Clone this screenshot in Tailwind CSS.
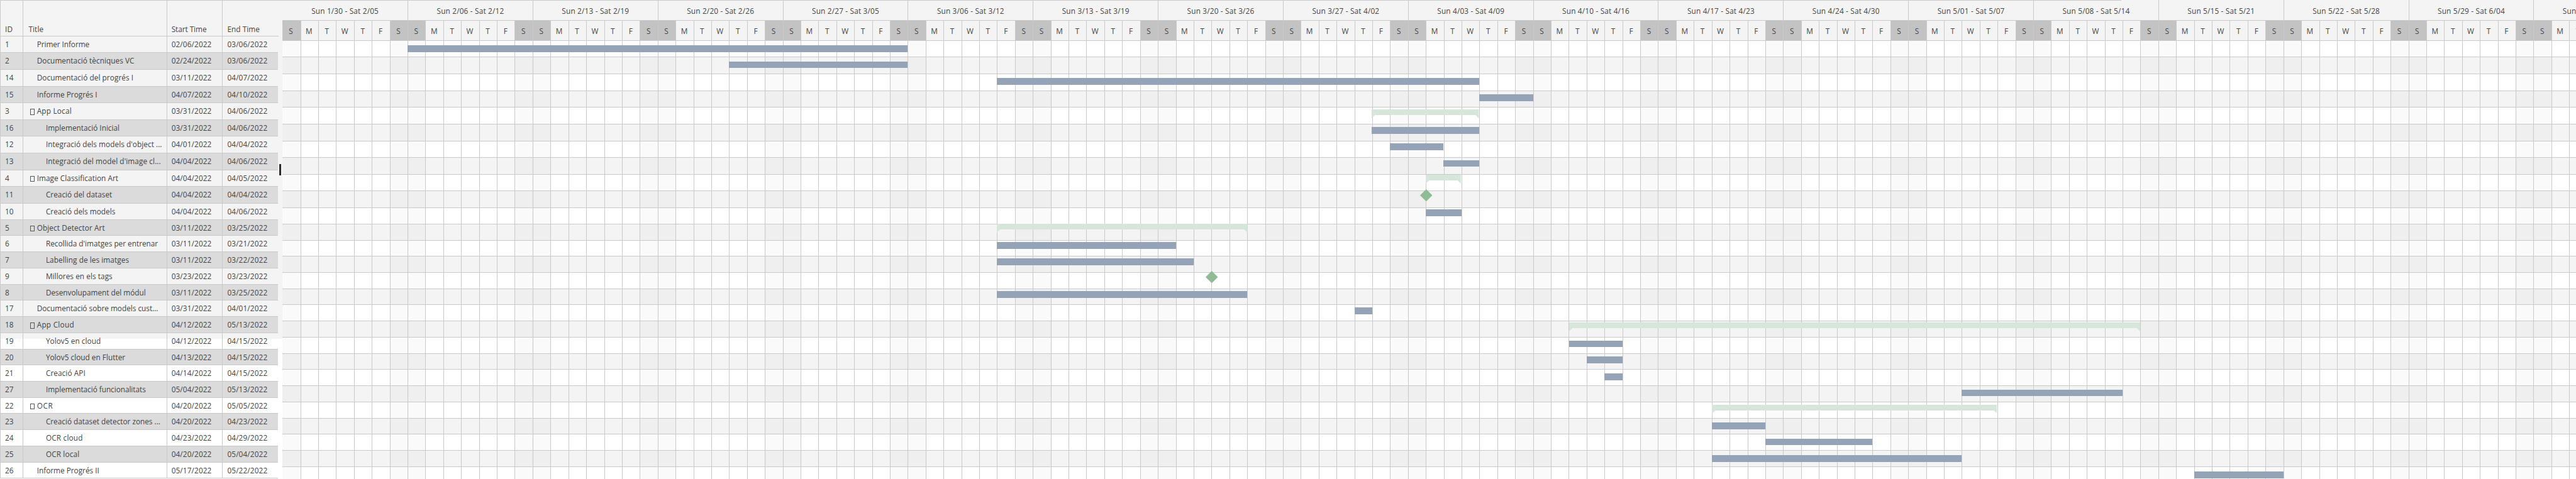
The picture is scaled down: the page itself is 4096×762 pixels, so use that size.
<!DOCTYPE html>
<html lang="ca">
<head>
<meta charset="utf-8">
<title>Gantt</title>
<script src="https://cdn.jsdelivr.net/npm/@tailwindcss/browser@4"></script>
</head>
<body class="overflow-hidden bg-white">
<div class="relative flex h-[859px] w-[4614px] overflow-hidden whitespace-nowrap bg-white font-['Open_Sans','Noto_Sans',sans-serif] text-[13.3px] leading-[28px] text-[#444] [zoom:0.88773]">
  <!-- task table -->
  <div class="w-[506px] shrink-0 bg-linear-to-b from-[#f4f4f4] from-[607px] to-white to-[607px]">
    <div class="flex h-[65px] w-[499px] items-end border-b border-[#c9c9c9] [&>div]:h-full [&>div]:border-l [&>div]:border-[#c9c9c9] [&>div]:pt-[38px]">
      <div class="w-[41px] pl-[8px]"><span data-w="13.5">ID</span></div>
      <div class="w-[257px] pl-[9px]"><span data-w="27">Title</span></div>
      <div class="w-[100px] pl-[8px]"><span data-w="63">Start Time</span></div>
      <div class="w-[100px] pl-[8px]"><span data-w="58">End Time</span></div>
    </div>
    <div id="table" class="w-[498px]"></div>
  </div>
  <!-- timeline -->
  <div class="w-[4108px] shrink-0 overflow-hidden">
    <div id="weeks" class="flex h-[37px] w-[4256px] border-b border-[#c9c9c9] bg-[#f4f4f4]"></div>
    <div id="days" class="flex h-[36px] w-[4256px] border-b border-[#c9c9c9]"></div>
    <div id="grid"></div>
  </div>
  <div class="absolute left-0 top-0 h-px w-[3800px] bg-[#c9c9c9]"></div>
  <div class="absolute left-[500px] top-[294px] h-[20px] w-[3px] bg-[#2b2b2b]"></div>
  <div id="bars" class="absolute left-0 top-0"></div>
</div>
<script>
// id, title, title width, indent level, group, start, end, bar type, bar x1, bar x2, bar y
const tasks = [
  [1,"Primer Informe",92.5,0,0,"02/06/2022","03/06/2022","t",730,1626,81],
  [2,"Documentació tècniques VC",173,0,0,"02/24/2022","03/06/2022","t",1306,1626,110],
  [14,"Documentació del progrés I",171.5,0,0,"03/11/2022","04/07/2022","t",1786,2650,140],
  [15,"Informe Progrés I",106.6,0,0,"04/07/2022","04/10/2022","t",2650,2746,169],
  [3,"App Local",60.7,0,1,"03/31/2022","04/06/2022","s",2457,2649,196],
  [16,"Implementació Inicial",130.6,1,0,"03/31/2022","04/06/2022","t",2457,2649,228],
  [12,"Integració dels models d'object ...",206.6,1,0,"04/01/2022","04/04/2022","t",2489,2585,257],
  [13,"Integració del model d'image cl...",204.6,1,0,"04/04/2022","04/06/2022","t",2585,2649,287],
  [4,"Image Classification Art",144.4,0,1,"04/04/2022","04/05/2022","s",2554,2617,313],
  [11,"Creació del dataset",117.3,1,0,"04/04/2022","04/04/2022","m",2554,2554,350],
  [10,"Creació dels models",123,1,0,"04/04/2022","04/06/2022","t",2554,2618,375],
  [5,"Object Detector Art",120.4,0,1,"03/11/2022","03/25/2022","s",1786,2235,401],
  [6,"Recollida d'imatges per entrenar",199.5,1,0,"03/11/2022","03/21/2022","t",1786,2106,434],
  [7,"Labelling de les imatges",147.5,1,0,"03/11/2022","03/22/2022","t",1786,2138,463],
  [9,"Millores en els tags",117.9,1,0,"03/23/2022","03/23/2022","m",2170,2170,497],
  [8,"Desenvolupament del módul",177.6,1,0,"03/11/2022","03/25/2022","t",1786,2234,522],
  [17,"Documentació sobre models cust...",215.8,0,0,"03/31/2022","04/01/2022","t",2426,2458,551],
  [18,"App Cloud",65.3,0,1,"04/12/2022","05/13/2022","s",2810,3833,578],
  [19,"Yolov5 en cloud",97,1,0,"04/12/2022","04/15/2022","t",2810,2906,610],
  [20,"Yolov5 cloud en Flutter",140.8,1,0,"04/13/2022","04/15/2022","t",2842,2906,639],
  [21,"Creació API",69.4,1,0,"04/14/2022","04/15/2022","t",2874,2906,669],
  [27,"Implementació funcionalitats",177.6,1,0,"05/04/2022","05/13/2022","t",3514,3802,698],
  [22,"OCR",27.5,0,1,"04/20/2022","05/05/2022","s",3066,3577,725],
  [23,"Creació dataset detector zones ...",203.6,1,0,"04/20/2022","04/23/2022","t",3066,3162,757],
  [24,"OCR cloud",64.8,1,0,"04/23/2022","04/29/2022","t",3162,3354,786],
  [25,"OCR local",58.7,1,0,"04/20/2022","05/04/2022","t",3066,3514,816],
  [26,"Informe Progrés II",110.2,0,0,"05/17/2022","05/22/2022","t",3930,4090,845]
];
const weeks = ["1/30 - Sat 2/05","2/06 - Sat 2/12","2/13 - Sat 2/19","2/20 - Sat 2/26","2/27 - Sat 3/05","3/06 - Sat 3/12","3/13 - Sat 3/19","3/20 - Sat 3/26","3/27 - Sat 4/02","4/03 - Sat 4/09","4/10 - Sat 4/16","4/17 - Sat 4/23","4/24 - Sat 4/30","5/01 - Sat 5/07","5/08 - Sat 5/14","5/15 - Sat 5/21","5/22 - Sat 5/28","5/29 - Sat 6/04","6/05 - Sat 6/11"];
const $ = id => document.getElementById(id);

$("weeks").innerHTML = weeks.map((w, i) =>
  `<div class="w-[224px] shrink-0 pt-[6px] text-center ${i ? "border-l border-[#c9c9c9]" : ""}"><span data-w="120.5">Sun ${w}</span></div>`).join("");

let d = "";
for (let i = 0; i < 133; i++) {
  const off = i % 7 === 0 || i % 7 === 6;
  d += `<div class="w-[32px] shrink-0 pr-[2px] pt-[5px] text-center ${i ? "border-l border-[#c9c9c9]" : ""} ${off ? "bg-[#c3c3c3]" : "bg-[#f4f4f4]"}">${"SMTWTFS"[i % 7]}</div>`;
}
$("days").innerHTML = d;

let table = "", grid = "", bars = "";
tasks.forEach((t, r) => {
  const [id, title, w, lvl, group, start, end, type, x1, x2, y] = t;
  const h = r < 10 ? "h-[30px]" : "h-[29px]";
  const cell = "h-full border-l border-[#c9c9c9]";
  table += `<div class="flex ${h} border-b border-[#c9c9c9] ${r % 2 ? "bg-[#dbdbdb]" : ""}">
<div class="${cell} w-[41px] pl-[8px]">${id}</div>
<div class="${cell} w-[257px] flex ${group ? "pl-[12px]" : lvl ? "pl-[40px]" : "pl-[24px]"}">${group ? '<i class="mt-[10px] mr-[4px] h-[11px] w-[8px] border border-[#555]"></i>' : ""}<span data-w="${w + 1.5}">${title}</span></div>
<div class="${cell} w-[100px] pl-[8px]"><span data-w="72">${start}</span></div>
<div class="${cell} w-[100px] pl-[8px]"><span data-w="72">${end}</span></div></div>`;
  let cells = "";
  for (let i = 0; i < 133; i++) {
    const off = i % 7 === 0 || i % 7 === 6;
    const bg = r % 2 ? (off ? "bg-[#efefef]" : "bg-[#f4f4f4]") : (off ? "bg-[#fafafa]" : "bg-white");
    cells += `<div class="w-[32px] shrink-0 ${i ? "border-l border-[#c9c9c9]" : ""} ${bg}"></div>`;
  }
  grid += `<div class="flex w-[4256px] ${h} border-b border-[#c9c9c9]">${cells}</div>`;
  const n = x2 - x1;
  if (type === "t") bars += `<div class="absolute h-[12px] bg-[#95a3b7]" style="left:${x1}px;top:${y}px;width:${n}px"></div>`;
  if (type === "s") bars += `<svg class="absolute h-[16px] fill-[#d6e6da]" style="left:${x1}px;top:${y}px;width:${n}px" viewBox="0 0 ${n} 16"><path d="M0 0H${n}V16L${n - 6} 10H6L0 16Z"/></svg>`;
  if (type === "m") bars += `<svg class="absolute h-[22px] w-[22px] fill-[#8fbc94]" style="left:${x1 - 10.5}px;top:${y - 11}px" viewBox="0 0 22 22"><path d="M11 0L22 11L11 22L0 11Z"/></svg>`;
});
$("table").innerHTML = table;
$("grid").innerHTML = grid;
$("bars").innerHTML = bars;

const ctx = document.createElement("canvas").getContext("2d");
ctx.font = '133px "Open Sans"';
document.querySelectorAll("[data-w]").forEach(s => {
  const m = ctx.measureText(s.textContent).width / 10;
  s.style.letterSpacing = ((s.dataset.w - m) / s.textContent.length).toFixed(3) + "px";
});
</script>
</body>
</html>
